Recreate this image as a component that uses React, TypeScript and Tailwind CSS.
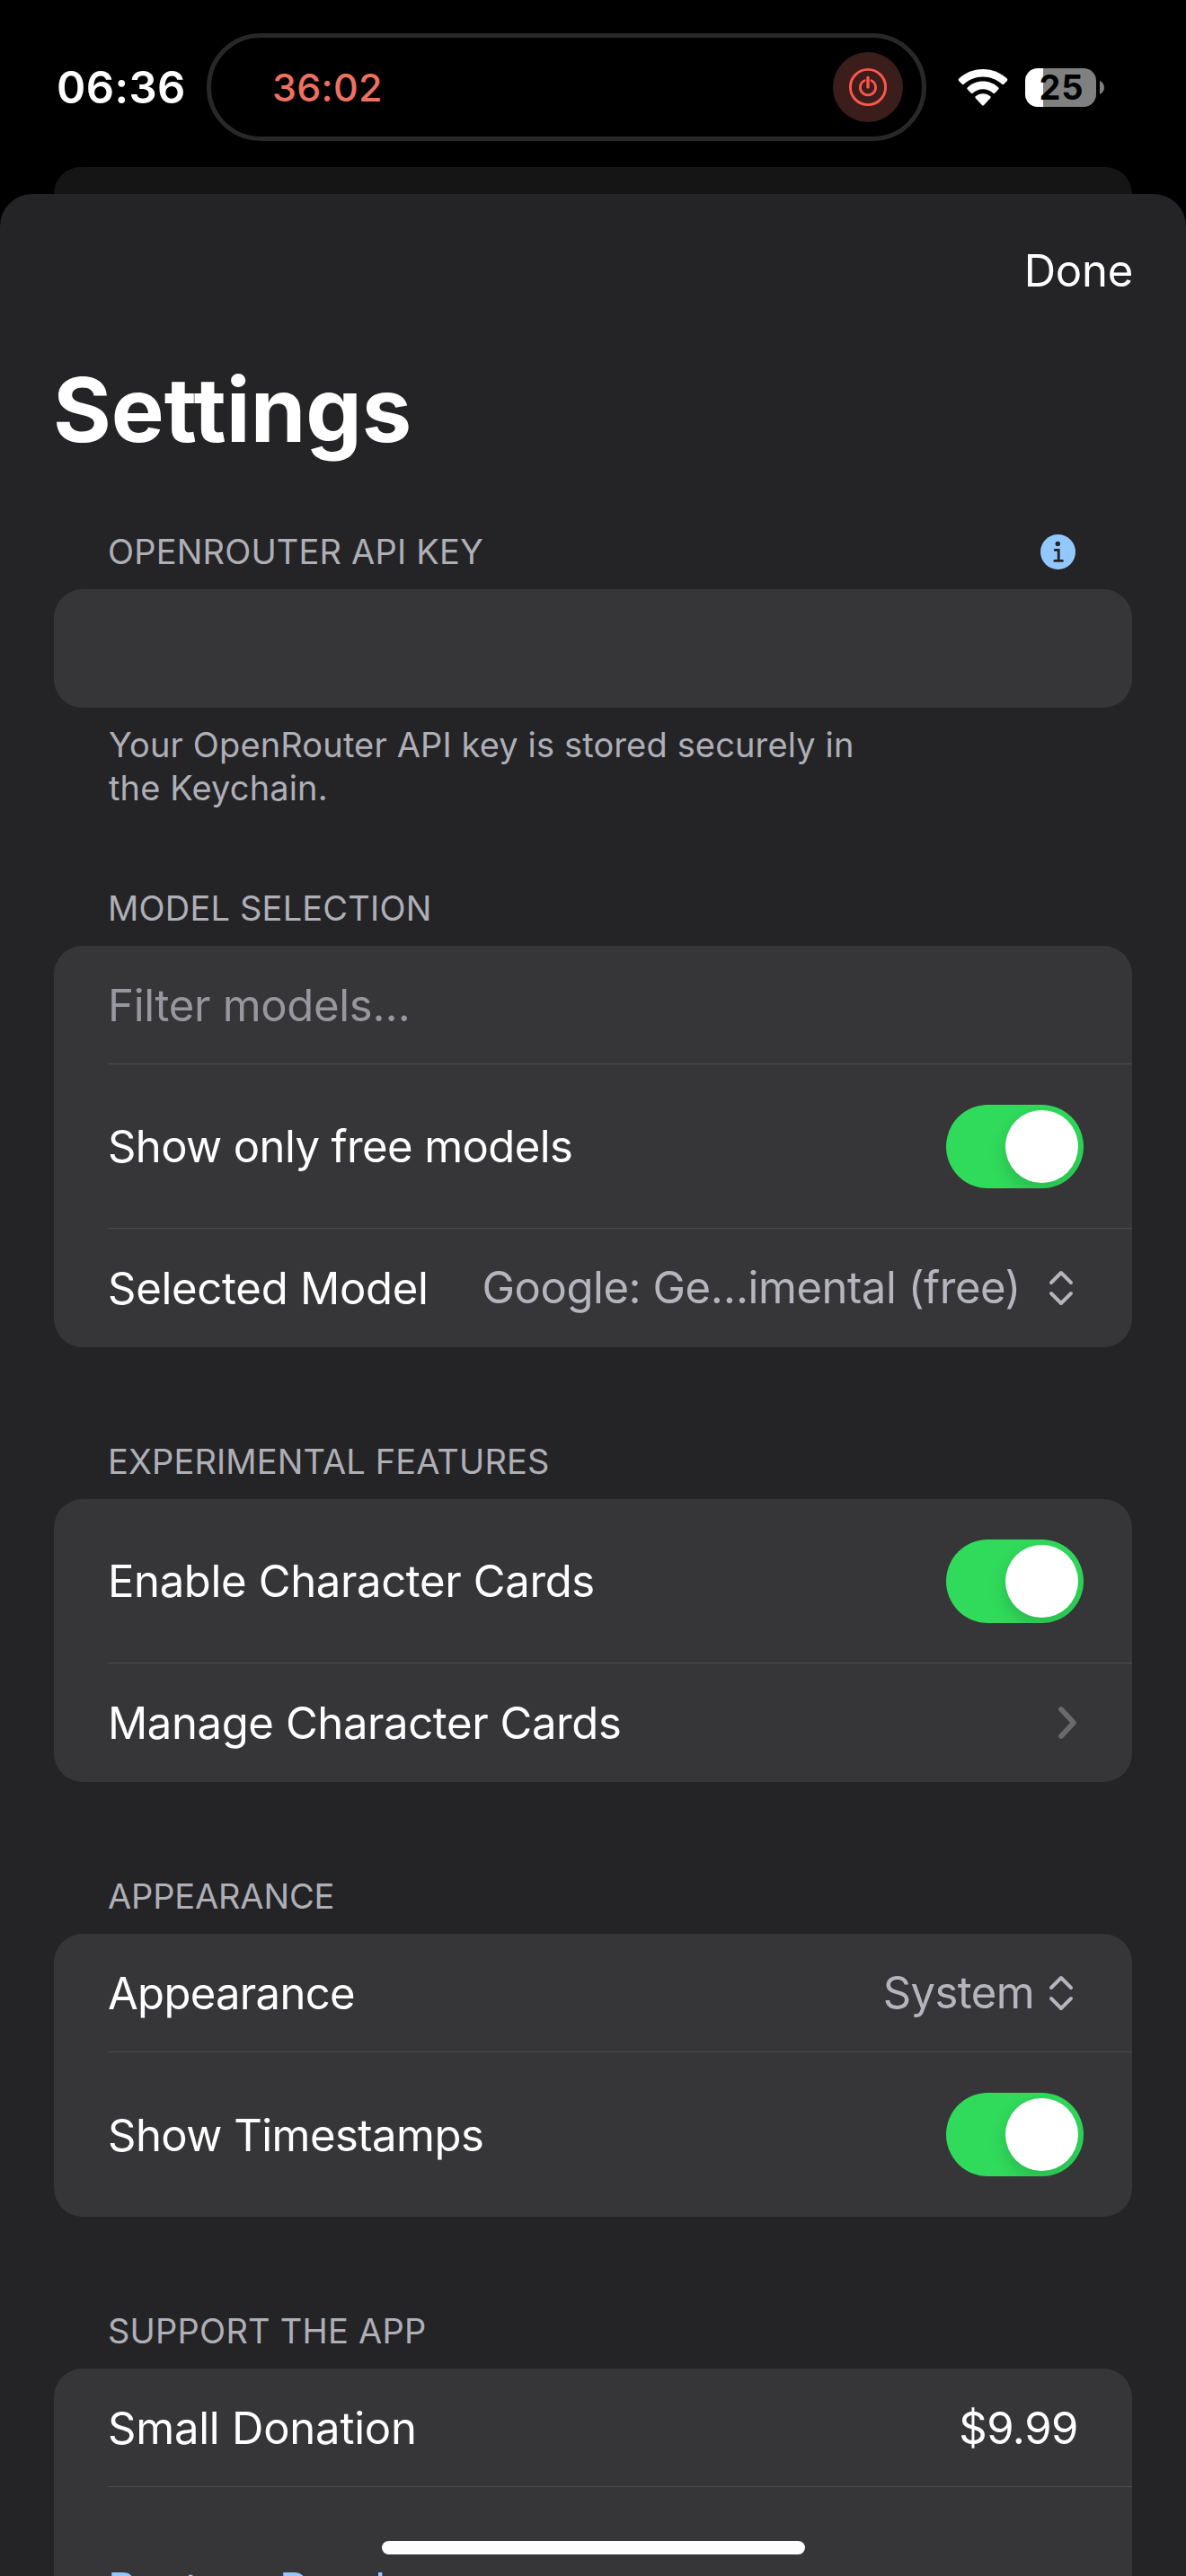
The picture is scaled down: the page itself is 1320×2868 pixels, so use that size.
import type { ReactNode } from "react";

function WifiIcon() {
  return (
    <svg className="block h-[41px] w-[56px]" viewBox="0 0 56 41" fill="#ffffff">
      <path d="M28 0C38.6 0 48 4.1 54.8 10.6Q56 11.8 54.9 13L51.4 16.6Q50.3 17.7 49 16.5C43.5 11.4 36.2 8.4 28 8.4S12.5 11.4 7 16.5Q5.7 17.7 4.6 16.6L1.1 13Q0 11.8 1.2 10.6C8 4.1 17.4 0 28 0Z" />
      <path d="M28 13.6C34.9 13.6 40.7 16.3 45.3 20.5Q46.3 21.5 45.2 22.6L41.4 26.5Q40.3 27.5 39.1 26.5C36.1 24 32.4 22.3 28 22.3S19.9 24 16.9 26.5Q15.7 27.5 14.6 26.5L10.8 22.6Q9.7 21.5 10.7 20.5C15.3 16.3 21.1 13.6 28 13.6Z" />
      <path d="M28 27.3C31.2 27.3 34 28.5 36.1 30.3Q37.2 31.3 36.1 32.5L29.1 39.9Q28 41 26.9 39.9L19.9 32.5Q18.8 31.3 19.9 30.3C22 28.5 24.8 27.3 28 27.3Z" />
    </svg>
  );
}

function Battery() {
  return (
    <div className="flex items-center">
      <div className="flex h-[43px] w-[79px] items-center justify-center rounded-[14px] bg-[linear-gradient(to_right,#ffffff_0_20px,#808080_20px)]">
        <span className="ml-[2px] text-[38px] leading-[43px] font-bold tracking-[1px] text-black">25</span>
      </div>
      <svg className="ml-[4px] block h-[15px] w-[5px]" viewBox="0 0 5 15" fill="#808080">
        <path d="M0 0C3 1.2 5 4 5 7.5S3 13.8 0 15Z" />
      </svg>
    </div>
  );
}

function PowerIcon() {
  return (
    <svg className="block h-[78px] w-[78px]" viewBox="0 0 78 78" fill="none" stroke="#ff564a">
      <circle cx="39" cy="39" r="39" fill="#3b1e1b" stroke="none" />
      <circle cx="39" cy="39" r="19.6" strokeWidth="2.9" />
      <path d="M35.2 31.6A8.6 8.6 0 1 0 42.8 31.6" strokeWidth="2.7" strokeLinecap="round" />
      <path d="M39 28.4V39" strokeWidth="3.4" strokeLinecap="round" />
    </svg>
  );
}

function InfoIcon() {
  return (
    <svg className="block h-[39px] w-[39px]" viewBox="0 0 39 39">
      <circle cx="19.5" cy="19.5" r="19.5" fill="#93c7ff" />
      <circle cx="19.3" cy="10.4" r="2.7" fill="#242426" />
      <path d="M16.2 17.4H20.2V29.4M15.8 29.4H24.4" fill="none" stroke="#242426" strokeWidth="2.9" strokeLinecap="round" />
    </svg>
  );
}

function UpDown() {
  return (
    <svg
      className="mr-[65px] block h-[40px] w-[28px]"
      viewBox="0 0 28 40"
      fill="none"
      stroke="#b5b5bd"
      strokeWidth="3.9"
      strokeLinecap="round"
      strokeLinejoin="round"
    >
      <path d="M3 14L14 3L25 14M3 26L14 37L25 26" />
    </svg>
  );
}

function ChevronRight() {
  return (
    <svg
      className="mr-[61px] block h-[38px] w-[22px]"
      viewBox="0 0 22 38"
      fill="none"
      stroke="#6a6a6c"
      strokeWidth="5.6"
      strokeLinecap="round"
      strokeLinejoin="round"
    >
      <path d="M4 4L18 19L4 34" />
    </svg>
  );
}

function Toggle() {
  return (
    <div className="mr-[54px] flex h-[93px] w-[153px] items-center justify-end overflow-hidden rounded-full bg-[#30db5b] pr-[6px]">
      <div className="size-[81px] rounded-full bg-white shadow-[0_8px_20px_rgba(0,0,0,0.16)]" />
    </div>
  );
}

function SectionHeader({ title, className, children }: { title: string; className: string; children?: ReactNode }) {
  return (
    <div className="flex h-[72px] items-center justify-between pr-[123px] pb-[12px] pl-[120px]">
      <h2 className={`text-[38px] leading-[60px] whitespace-nowrap text-[#afafb7] ${className}`}>{title}</h2>
      {children}
    </div>
  );
}

function Card({ children }: { children?: ReactNode }) {
  return <div className="mx-[60px] overflow-hidden rounded-[32px] bg-[#363638]">{children}</div>;
}

function Row({ height, divided, children }: { height: string; divided?: boolean; children: ReactNode }) {
  return (
    <div
      className={`ml-[60px] flex items-center justify-between ${height} ${divided ? "border-b border-[#4c4c4e]" : ""}`}
    >
      {children}
    </div>
  );
}

function Label({ className, children }: { className: string; children: ReactNode }) {
  return <span className={`pt-[2px] text-[49px] leading-[60px] whitespace-nowrap ${className}`}>{children}</span>;
}

export default function App() {
  return (
    <div className="relative flex h-[2868px] w-[1320px] flex-col overflow-hidden bg-black font-['Inter','Liberation_Sans',sans-serif] text-white">
      <header className="h-[186px] shrink-0 pt-[37px]">
        <div className="flex h-[120px] items-center">
          <span className="w-[230px] pt-[2px] pl-[63px] text-[49px] leading-[60px] font-semibold tracking-[0.4px]">
            06:36
          </span>
          <div className="flex h-[120px] w-[801px] items-center justify-between rounded-full border-[5px] border-[#282828] pr-[21px] pl-[68px]">
            <span className="text-[43px] leading-[60px] font-medium tracking-[0.29px] text-[#ec7161]">36:02</span>
            <PowerIcon />
          </div>
          <div className="ml-[35px]">
            <WifiIcon />
          </div>
          <div className="ml-[19px]">
            <Battery />
          </div>
        </div>
      </header>

      <div className="mx-[60px] h-[30px] shrink-0 rounded-t-[32px] bg-[#151515]" />

      <main className="min-h-0 flex-1 overflow-hidden rounded-t-[36px] bg-[#242426]">
        <div className="flex h-[170px] items-center justify-end pr-[59px]">
          <button className="pt-[1px] text-[49px] leading-[60px] tracking-[-0.23px]">Done</button>
        </div>
        <h1 className="h-[140px] pl-[59px] text-[99px] leading-[140px] font-bold">Settings</h1>

        <section className="mt-[58px]">
          <SectionHeader title="OPENROUTER API KEY" className="tracking-[0.18px]">
            <InfoIcon />
          </SectionHeader>
          <Card>
            <div className="h-[132px]" />
          </Card>
          <p className="pt-[17px] pl-[121px] text-[38px] leading-[48px] tracking-[0.14px] text-[#afafb7]">
            Your OpenRouter API key is stored securely in
            <br />
            the Keychain.
          </p>
        </section>

        <section className="mt-[80px]">
          <SectionHeader title="MODEL SELECTION" className="tracking-[0.2px]" />
          <Card>
            <Row height="h-[132px]" divided>
              <Label className="tracking-[-0.3px] text-[#97979e]">Filter models…</Label>
            </Row>
            <Row height="h-[183px]" divided>
              <Label className="tracking-[-0.6px]">Show only free models</Label>
              <Toggle />
            </Row>
            <Row height="h-[132px]">
              <Label className="tracking-[-0.27px]">Selected Model</Label>
              <div className="flex items-center">
                <span className="mr-[31px] text-[49px] leading-[60px] tracking-[-0.46px] whitespace-nowrap text-[#b5b5bd]">
                  Google: Ge…imental (free)
                </span>
                <UpDown />
              </div>
            </Row>
          </Card>
        </section>

        <section className="mt-[97px]">
          <SectionHeader title="EXPERIMENTAL FEATURES" className="tracking-[0.13px]" />
          <Card>
            <Row height="h-[183px]" divided>
              <Label className="tracking-[-0.35px]">Enable Character Cards</Label>
              <Toggle />
            </Row>
            <Row height="h-[132px]">
              <Label className="tracking-[-0.39px]">Manage Character Cards</Label>
              <ChevronRight />
            </Row>
          </Card>
        </section>

        <section className="mt-[97px]">
          <SectionHeader title="APPEARANCE" className="tracking-[-0.15px]" />
          <Card>
            <Row height="h-[132px]" divided>
              <Label className="tracking-[-0.7px]">Appearance</Label>
              <div className="flex items-center">
                <span className="mr-[16px] text-[49px] leading-[60px] tracking-[-0.59px] text-[#b5b5bd]">System</span>
                <UpDown />
              </div>
            </Row>
            <Row height="h-[183px]">
              <Label className="tracking-[-0.53px]">Show Timestamps</Label>
              <Toggle />
            </Row>
          </Card>
        </section>

        <section className="mt-[97px]">
          <SectionHeader title="SUPPORT THE APP" className="tracking-[0.23px]" />
          <Card>
            <Row height="h-[132px]" divided>
              <Label className="tracking-[-0.22px]">Small Donation</Label>
              <Label className="mr-[60px] tracking-[-0.46px]">$9.99</Label>
            </Row>
            <Row height="h-[226px]">
              <Label className="tracking-[0.1px] text-[#93c7ff]">Restore Purchases</Label>
            </Row>
          </Card>
        </section>
      </main>

      <div className="absolute bottom-[24px] left-[425px] h-[15px] w-[471px] rounded-full bg-[#fdfdfd]" />
    </div>
  );
}
